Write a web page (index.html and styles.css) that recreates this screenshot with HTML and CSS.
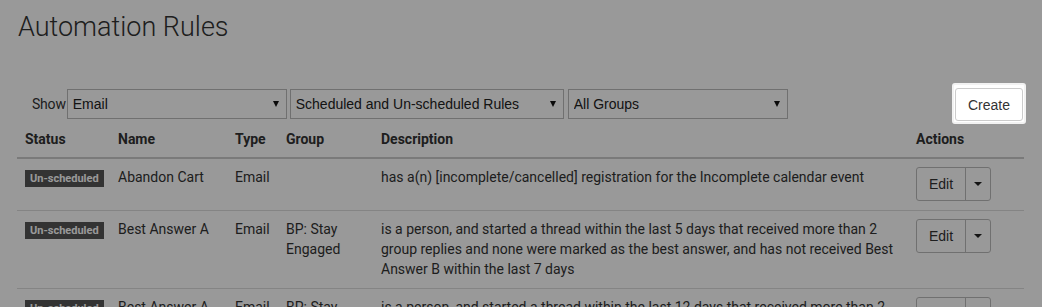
FILE: index.html
```html
<!DOCTYPE html>
<html lang="en">
<head>
    <meta charset="UTF-8">
    <meta name="viewport" content="width=device-width, initial-scale=1.0">
    <title>Automation Rules</title>
    <link rel="stylesheet" href="styles.css">
</head>
<body>
    <div class="page">
        <h1 class="page-title">Automation Rules</h1>

        <div class="toolbar">
            <div class="filters">
                <label class="filter-label">Show</label>
                <div class="select-wrap select-type">
                    <select>
                        <option>Email</option>
                    </select>
                    <span class="select-arrow"></span>
                </div>
                <div class="select-wrap select-schedule">
                    <select>
                        <option>Scheduled and Un-scheduled Rules</option>
                    </select>
                    <span class="select-arrow"></span>
                </div>
                <div class="select-wrap select-group">
                    <select>
                        <option>All Groups</option>
                    </select>
                    <span class="select-arrow"></span>
                </div>
            </div>

            <!-- walkthrough step: the create button stays lit above the backdrop -->
            <div class="spotlight">
                <button class="btn">Create</button>
            </div>
        </div>

        <table class="rules">
            <colgroup>
                <col class="col-status">
                <col class="col-name">
                <col class="col-type">
                <col class="col-group">
                <col class="col-desc">
                <col class="col-actions">
            </colgroup>
            <thead>
                <tr>
                    <th>Status</th>
                    <th>Name</th>
                    <th>Type</th>
                    <th>Group</th>
                    <th>Description</th>
                    <th>Actions</th>
                </tr>
            </thead>
            <tbody>
                <tr>
                    <td><span class="badge">Un-scheduled</span></td>
                    <td>Abandon Cart</td>
                    <td>Email</td>
                    <td></td>
                    <td>has a(n) [incomplete/cancelled] registration for the Incomplete calendar event</td>
                    <td>
                        <div class="btn-split">
                            <button class="btn-part">Edit</button>
                            <button class="btn-part btn-caret"><span class="caret"></span></button>
                        </div>
                    </td>
                </tr>
                <tr>
                    <td><span class="badge">Un-scheduled</span></td>
                    <td>Best Answer A</td>
                    <td>Email</td>
                    <td>BP: Stay Engaged</td>
                    <td>is a person, and started a thread within the last 5 days that received more than 2 group replies and none were marked as the best answer, and has not received Best Answer B within the last 7 days</td>
                    <td>
                        <div class="btn-split">
                            <button class="btn-part">Edit</button>
                            <button class="btn-part btn-caret"><span class="caret"></span></button>
                        </div>
                    </td>
                </tr>
                <tr>
                    <td><span class="badge">Un-scheduled</span></td>
                    <td>Best Answer A</td>
                    <td>Email</td>
                    <td>BP: Stay Engaged</td>
                    <td>is a person, and started a thread within the last 12 days that received more than 2 group replies and none were marked as the best answer, and has not received Best Answer B within the last 7 days</td>
                    <td>
                        <div class="btn-split">
                            <button class="btn-part">Edit</button>
                            <button class="btn-part btn-caret"><span class="caret"></span></button>
                        </div>
                    </td>
                </tr>
            </tbody>
        </table>
    </div>

    <div class="backdrop"></div>
</body>
</html>
```

FILE: styles.css
```css
* {
    margin: 0;
    padding: 0;
    box-sizing: border-box;
}

html, body {
    overflow: hidden;
}

body {
    font-family: Roboto, 'Liberation Sans', sans-serif;
    font-size: 14px;
    color: #333;
    background: white;
}

.page {
    padding: 11px 18px 0 17px;
}

.page-title {
    font-size: 27px;
    font-weight: 300;
    line-height: 33px;
    margin-left: 1px;
}

/* filters + create */

.toolbar {
    display: flex;
    justify-content: space-between;
    align-items: center;
    margin-top: 39px;
    padding-left: 15px;
}

.filters {
    display: flex;
    align-items: center;
    gap: 3px;
}

.filter-label {
    margin-right: -2px;
    letter-spacing: -0.2px;
}

.select-wrap {
    position: relative;
}

.select-wrap select {
    appearance: none;
    -webkit-appearance: none;
    display: block;
    width: 100%;
    height: 30px;
    padding: 0 20px 0 5px;
    border: 1px solid #bbb;
    border-radius: 0;
    background: white;
    font-family: Arial, 'Liberation Sans', sans-serif;
    font-size: 14px;
    color: #222;
}

.select-arrow {
    position: absolute;
    right: 8px;
    top: 12px;
    border-top: 6px solid #111;
    border-left: 3px solid transparent;
    border-right: 3px solid transparent;
    pointer-events: none;
}

.select-type { width: 220px; }
.select-schedule { width: 274px; }
.select-group { width: 220px; margin-left: 1px; }

.spotlight {
    position: relative;
    z-index: 20;
    padding: 3px 1px 1px 1px;
    margin-right: -2px;
    background: white;
    border: 2px solid #f2f2f2;
    border-radius: 3px;
}

.btn {
    display: block;
    height: 33px;
    padding: 0 12px;
    border: 1px solid #ccc;
    border-radius: 3px;
    background: white;
    font-family: Arial, 'Liberation Sans', sans-serif;
    font-size: 14px;
    color: #333;
}

/* rules table */

.rules {
    width: 100%;
    border-collapse: collapse;
    table-layout: fixed;
    line-height: 20px;
}

.col-status { width: 93px; }
.col-name { width: 117px; }
.col-type { width: 51px; }
.col-group { width: 95px; }
.col-desc { width: 535px; }
.col-actions { width: 116px; }

.rules th {
    text-align: left;
    font-weight: 700;
    padding: 5px 8px 8px;
    border-bottom: 2px solid #ccc;
}

.rules td {
    vertical-align: top;
    padding: 8px 8px 9px;
    border-bottom: 1px solid #ddd;
}

.badge {
    display: inline-block;
    vertical-align: top;
    margin-top: 3px;
    padding: 0 5px;
    line-height: 17px;
    font-size: 11px;
    font-weight: 700;
    white-space: nowrap;
    color: white;
    background: #555;
}

.btn-split {
    display: inline-flex;
    height: 34px;
    border: 1px solid #bbb;
    border-radius: 3px;
    background: white;
}

.btn-part {
    border: none;
    background: transparent;
    padding: 0 12px;
    font-family: Arial, 'Liberation Sans', sans-serif;
    font-size: 14px;
    color: #333;
}

.btn-caret {
    border-left: 1px solid #bbb;
    padding: 0 8px;
    display: flex;
    align-items: center;
}

.caret {
    display: block;
    border-top: 4px solid #222;
    border-left: 4px solid transparent;
    border-right: 4px solid transparent;
}

.backdrop {
    position: fixed;
    inset: 0;
    z-index: 10;
    background: rgba(0, 0, 0, 0.4);
}
```
